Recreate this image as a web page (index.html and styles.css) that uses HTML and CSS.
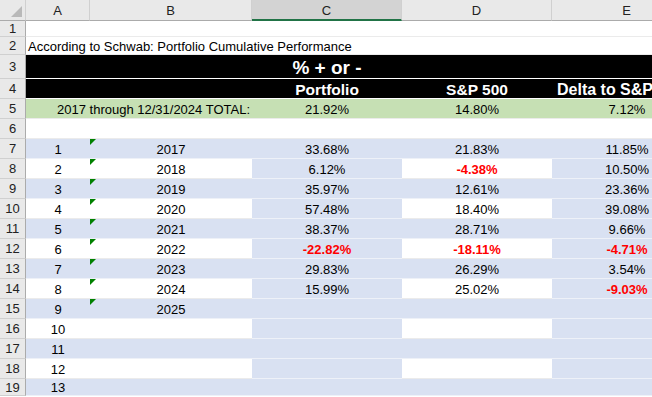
FILE: index.html
```html
<!DOCTYPE html>
<html>
<head>
<meta charset="utf-8">
<link rel="stylesheet" href="styles.css">
</head>
<body>
<div class="sheet">
  <!-- column headers -->
  <div class="ch corner"><span class="tri"></span></div>
  <div class="ch">A</div>
  <div class="ch">B</div>
  <div class="ch sel">C</div>
  <div class="ch">D</div>
  <div class="ch">E</div>

  <!-- row 1 -->
  <div class="rh">1</div><div class="c"></div><div class="c"></div><div class="c"></div><div class="c"></div><div class="c"></div>

  <!-- row 2 -->
  <div class="rh">2</div><div class="c left">According to Schwab: Portfolio Cumulative Performance</div><div class="c"></div><div class="c"></div><div class="c"></div><div class="c"></div>

  <!-- row 3 -->
  <div class="rh">3</div><div class="c black"></div><div class="c black"></div><div class="c black big">% + or -</div><div class="c black"></div><div class="c black"></div>

  <!-- row 4 -->
  <div class="rh">4</div><div class="c black"></div><div class="c black"></div><div class="c black head">Portfolio</div><div class="c black head">S&amp;P 500</div><div class="c black head wide">Delta to S&amp;P 500</div>

  <!-- row 5 -->
  <div class="rh">5</div><div class="c green"></div><div class="c green right">2017 through 12/31/2024 TOTAL:</div><div class="c green">21.92%</div><div class="c green">14.80%</div><div class="c green">7.12%</div>

  <!-- row 6 -->
  <div class="rh">6</div><div class="c"></div><div class="c"></div><div class="c"></div><div class="c"></div><div class="c"></div>

  <!-- row 7 -->
  <div class="rh">7</div><div class="c blue">1</div><div class="c blue err">2017</div><div class="c blue">33.68%</div><div class="c blue">21.83%</div><div class="c blue">11.85%</div>
  <!-- row 8 -->
  <div class="rh">8</div><div class="c">2</div><div class="c err">2018</div><div class="c blue">6.12%</div><div class="c neg">-4.38%</div><div class="c blue">10.50%</div>
  <!-- row 9 -->
  <div class="rh">9</div><div class="c blue">3</div><div class="c blue err">2019</div><div class="c blue">35.97%</div><div class="c blue">12.61%</div><div class="c blue">23.36%</div>
  <!-- row 10 -->
  <div class="rh">10</div><div class="c">4</div><div class="c err">2020</div><div class="c blue">57.48%</div><div class="c">18.40%</div><div class="c blue">39.08%</div>
  <!-- row 11 -->
  <div class="rh">11</div><div class="c blue">5</div><div class="c blue err">2021</div><div class="c blue">38.37%</div><div class="c blue">28.71%</div><div class="c blue">9.66%</div>
  <!-- row 12 -->
  <div class="rh">12</div><div class="c">6</div><div class="c err">2022</div><div class="c blue neg">-22.82%</div><div class="c neg">-18.11%</div><div class="c blue neg">-4.71%</div>
  <!-- row 13 -->
  <div class="rh">13</div><div class="c blue">7</div><div class="c blue err">2023</div><div class="c blue">29.83%</div><div class="c blue">26.29%</div><div class="c blue">3.54%</div>
  <!-- row 14 -->
  <div class="rh">14</div><div class="c">8</div><div class="c err">2024</div><div class="c blue">15.99%</div><div class="c">25.02%</div><div class="c blue neg">-9.03%</div>
  <!-- row 15 -->
  <div class="rh">15</div><div class="c blue">9</div><div class="c blue err">2025</div><div class="c blue"></div><div class="c blue"></div><div class="c blue"></div>
  <!-- row 16 -->
  <div class="rh">16</div><div class="c">10</div><div class="c"></div><div class="c blue"></div><div class="c"></div><div class="c blue"></div>
  <!-- row 17 -->
  <div class="rh">17</div><div class="c blue">11</div><div class="c blue"></div><div class="c blue"></div><div class="c blue"></div><div class="c blue"></div>
  <!-- row 18 -->
  <div class="rh">18</div><div class="c">12</div><div class="c"></div><div class="c blue"></div><div class="c"></div><div class="c blue"></div>
  <!-- row 19 -->
  <div class="rh">19</div><div class="c blue">13</div><div class="c blue"></div><div class="c blue"></div><div class="c blue"></div><div class="c blue"></div>
</div>
</body>
</html>
```

FILE: styles.css
```css
html, body {
  margin: 0;
  padding: 0;
  background: #ffffff;
}
body {
  width: 652px;
  height: 397px;
  overflow: hidden;
  font-family: "Liberation Sans", Arial, sans-serif;
  font-size: 13px;
  color: #000;
}
.sheet {
  display: grid;
  grid-template-columns: 26px 64px 162px 150px 150px 150px;
  grid-template-rows: 21px 16px 18px 24px 20px 20px repeat(13, 20px);
  width: 702px;
}
.ch {
  background: #e9e9e9;
  border-right: 1px solid #d0d0d0;
  border-bottom: 1px solid #ababab;
  box-sizing: border-box;
  display: flex;
  align-items: center;
  justify-content: center;
  color: #222;
  font-size: 13px;
  padding-top: 1px;
}
.ch.sel {
  background: #d3d3d3;
  border-bottom: 2px solid #217346;
  color: #222;
}
.corner {
  position: relative;
  background: #e9e9e9;
}
.corner .tri {
  position: absolute;
  right: 3px;
  bottom: 3px;
  width: 0;
  height: 0;
  border-left: 11px solid transparent;
  border-bottom: 11px solid #b9b9b9;
}
.rh {
  background: #e9e9e9;
  border-right: 1px solid #ababab;
  border-bottom: 1px solid #d0d0d0;
  box-sizing: border-box;
  display: flex;
  align-items: center;
  justify-content: center;
  color: #222;
  font-size: 13px;
}
.c {
  box-sizing: border-box;
  border-bottom: 1px solid #ebebeb;
  display: flex;
  align-items: center;
  justify-content: center;
  white-space: nowrap;
  line-height: 15px;
  padding-top: 1px;
  min-width: 0;
}
.c.left {
  justify-content: flex-start;
  padding-left: 2px;
  overflow: visible;
}
.c.right {
  justify-content: flex-end;
  padding-right: 2px;
}
.blue {
  background: #d9e1f2;
  border-bottom-color: #eef1f8;
}
.green {
  background: #c6e0b4;
  border-bottom-color: #ebebeb;
}
.black {
  background: #000;
  color: #fff;
  border-bottom-color: #ffffff;
}
.big {
  font-weight: bold;
  font-size: 19px;
  padding-top: 2px;
}
.head {
  font-weight: bold;
  font-size: 15.5px;
  padding-top: 1px;
}
.c.wide {
  justify-content: flex-start;
  padding-left: 5px;
  font-size: 16px;
}
.neg {
  color: #ff0000;
  font-weight: bold;
}
.err {
  position: relative;
}
.err::before {
  content: "";
  position: absolute;
  left: 0;
  top: 0;
  width: 0;
  height: 0;
  border-top: 6px solid #008000;
  border-right: 6px solid transparent;
}
```
